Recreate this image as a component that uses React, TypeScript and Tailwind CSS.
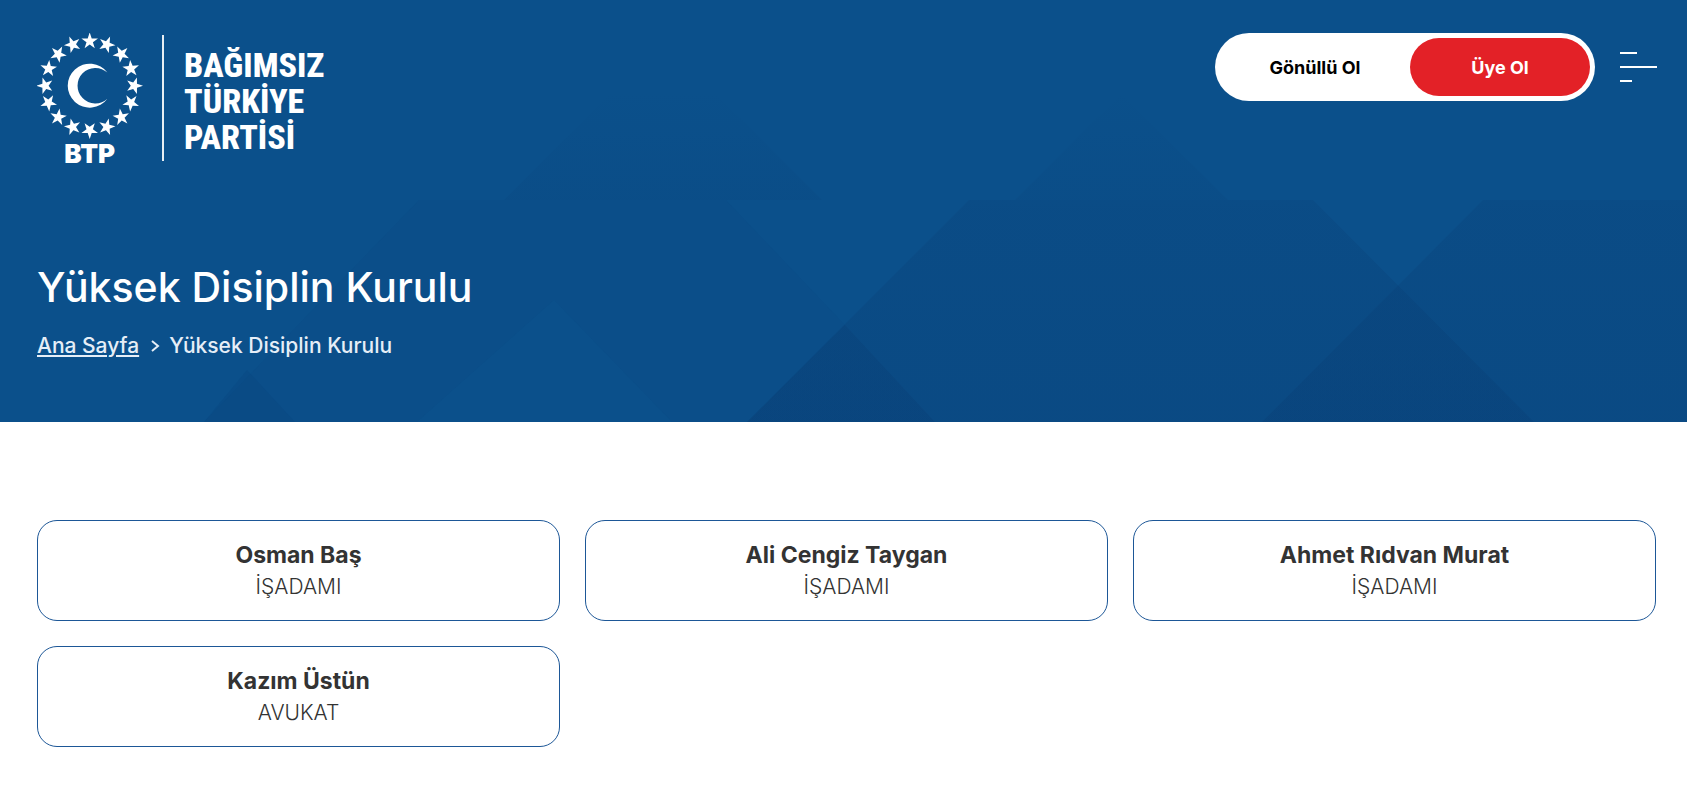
import React from 'react'

const members = [
  { name: 'Osman Baş', role: 'İŞADAMI' },
  { name: 'Ali Cengiz Taygan', role: 'İŞADAMI' },
  { name: 'Ahmet Rıdvan Murat', role: 'İŞADAMI' },
  { name: 'Kazım Üstün', role: 'AVUKAT' },
]

// 16 stars around the crescent
const starAngles = Array.from({ length: 16 }, (_, i) => i * 22.5)

function Emblem() {
  return (
    <svg className="h-[140px] w-[106px] shrink-0" viewBox="0 0 106 140" fill="#fff" aria-hidden="true">
      {starAngles.map((angle) => (
        <path
          key={angle}
          transform={`rotate(${angle} 52.7 52.7)`}
          d="M52.7 -0.6 L54.7 5.4 L61 5.5 L55.9 9.2 L57.8 15.2 L52.7 11.6 L47.6 15.2 L49.5 9.2 L44.4 5.5 L50.7 5.4 Z"
        />
      ))}
      <path d="M70.4 39.6 A22 22 0 1 0 70.4 65.8 A17.8 17.8 0 1 1 70.4 39.6 Z" />
      <text x="52.7" y="130" textAnchor="middle" className="font-['Inter',sans-serif] text-[26px] font-black">
        BTP
      </text>
    </svg>
  )
}

function Logo() {
  return (
    <a href="#" className="flex items-start text-white">
      <Emblem />
      <span className="mt-[2px] ml-[19px] h-[126px] w-[2px] bg-white/90" />
      <span className="mt-[14px] ml-5 flex flex-col font-['Roboto_Condensed','Roboto',sans-serif] text-[34px] leading-9 font-extrabold">
        <span>BAĞIMSIZ</span>
        <span>TÜRKİYE</span>
        <span>PARTİSİ</span>
      </span>
    </a>
  )
}

function HeroPattern() {
  return (
    <svg
      className="absolute inset-0 h-full w-full"
      viewBox="0 0 1687 422"
      preserveAspectRatio="none"
      aria-hidden="true"
    >
      <defs>
        <linearGradient id="fade" x1="0" y1="0" x2="0" y2="422" gradientUnits="userSpaceOnUse">
          <stop offset="0.2" stopColor="#083a70" stopOpacity="0" />
          <stop offset="0.5" stopColor="#083a70" stopOpacity="0.2" />
          <stop offset="1" stopColor="#083a70" stopOpacity="0.28" />
        </linearGradient>
        <linearGradient id="fade-top" x1="0" y1="90" x2="0" y2="200" gradientUnits="userSpaceOnUse">
          <stop offset="0" stopColor="#083a70" stopOpacity="0" />
          <stop offset="1" stopColor="#083a70" stopOpacity="0.12" />
        </linearGradient>
      </defs>
      <g fill="url(#fade-top)">
        <path d="M663 41 L822 200 H504 Z" />
        <path d="M1121 94 L1228 200 H1015 Z" />
      </g>
      <g fill="url(#fade)">
        <path d="M969 200 H1313 L1534 422 H747 Z" />
        <path d="M1483 200 H1687 V422 H1262 Z" />
        <path d="M845 325 L935 422 H747 Z" />
      </g>
      <g fill="#083a70">
        <path d="M419 200 H726 L845 325 L747 422 H672 L554 300 L417 422 H204 Z" fillOpacity="0.07" />
        <path d="M247 370 L295 422 H204 Z" fillOpacity="0.14" />
      </g>
    </svg>
  )
}

function Header() {
  return (
    <header className="flex items-start justify-between">
      <Logo />
      <div className="flex items-center gap-[25px]">
        <div className="flex rounded-full bg-white p-[5px] text-[18px] font-bold">
          <a href="#" className="flex h-[58px] w-[190px] items-center justify-center text-black">
            Gönüllü Ol
          </a>
          <a href="#" className="flex h-[58px] w-[180px] items-center justify-center rounded-full bg-[#e32127] text-white">
            Üye Ol
          </a>
        </div>
        <button type="button" aria-label="Menü" className="flex w-[37px] flex-col gap-3">
          <span className="h-[2px] w-[17px] bg-white" />
          <span className="h-[2px] w-full bg-white" />
          <span className="h-[2px] w-3 bg-white" />
        </button>
      </div>
    </header>
  )
}

export default function App() {
  return (
    <div className="min-h-screen bg-white font-['Inter',sans-serif]">
      <div className="relative bg-[#0b508b]">
        <HeroPattern />
        <div className="relative pt-[33px] pr-[30px] pb-[61px] pl-[37px]">
          <Header />
          <h1 className="mt-[84px] text-[41px] leading-[60px] font-medium text-white">Yüksek Disiplin Kurulu</h1>
          <nav className="mt-[14px] flex items-center text-[21px] leading-[30px] font-medium text-[#e6eef7]">
            <a href="#" className="underline">
              Ana Sayfa
            </a>
            <svg className="mr-[9px] ml-3 h-3 w-[9px]" viewBox="0 0 9 12" fill="none" stroke="currentColor" strokeWidth="2">
              <path d="M1 1 L7 6 L1 11" />
            </svg>
            <span>Yüksek Disiplin Kurulu</span>
          </nav>
        </div>
      </div>

      <main className="pt-[98px] pr-[31px] pb-12 pl-[37px]">
        <ul className="grid grid-cols-3 gap-[25px]">
          {members.map((member) => (
            <li
              key={member.name}
              className="rounded-[20px] border border-[#1d5797] pt-[19px] pb-[17px] text-center text-[#333]"
            >
              <h2 className="text-[23px] leading-[31px] font-bold">{member.name}</h2>
              <p className="text-[21px] leading-8 font-light">{member.role}</p>
            </li>
          ))}
        </ul>
      </main>
    </div>
  )
}
